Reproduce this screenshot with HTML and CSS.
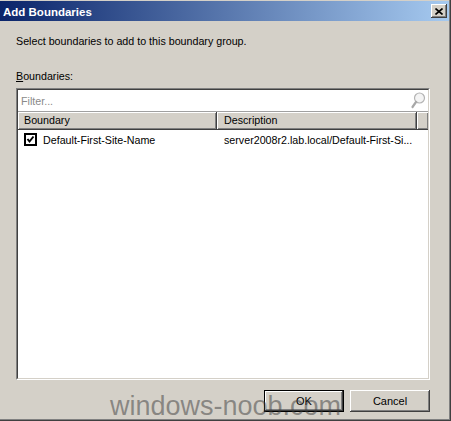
FILE: index.html
```html
<!DOCTYPE html>
<html lang="en">
  <head>
    <meta charset="UTF-8" />
    <title>Add Boundaries</title>
    <link rel="stylesheet" href="styles.css">
  </head>
  <body>
    <div class="window">
      <div class="titlebar">
        <span class="title">Add Boundaries</span>
        <button class="close-btn">
          <svg width="8" height="7" viewBox="0 0 8 7">
            <path d="M0.5 0.5 L7.5 6.5 M7.5 0.5 L0.5 6.5" stroke="#000" stroke-width="1.6" fill="none" />
          </svg>
        </button>
      </div>

      <div class="content">
        <p class="intro">Select boundaries to add to this boundary group.</p>
        <div class="field-label"><u>B</u>oundaries:</div>

        <div class="listbox">
          <div class="listbox-inner">
            <div class="filter">
              <span class="filter-hint">Filter...</span>
              <svg class="search-icon" width="16" height="17" viewBox="0 0 16 17">
                <circle cx="9.5" cy="6" r="5" fill="#f4f4f4" stroke="#b4b4b4" stroke-width="1.2" />
                <path d="M6 10 L2.5 15" stroke="#a8a8a8" stroke-width="2.2" stroke-linecap="round" />
              </svg>
            </div>

            <div class="list-header">
              <div class="col col-name">Boundary</div>
              <div class="col col-desc">Description</div>
              <div class="col col-rest"></div>
            </div>

            <div class="list-row">
              <div class="cell cell-name">
                <svg class="checkbox" width="13" height="13" viewBox="0 0 13 13">
                  <rect x="1" y="1" width="11" height="11" fill="#fff" stroke="#000" stroke-width="2" />
                  <path d="M3.5 6 L5.5 8.5 L9.5 3.5" stroke="#000" stroke-width="2" fill="none" />
                </svg>
                <span>Default-First-Site-Name</span>
              </div>
              <div class="cell cell-desc">server2008r2.lab.local/Default-First-Si...</div>
            </div>
          </div>
        </div>

        <div class="buttons">
          <button class="btn btn-default">OK</button>
          <button class="btn">Cancel</button>
        </div>
      </div>

      <div class="watermark">windows-noob.com</div>
    </div>
  </body>
</html>
```

FILE: styles.css
```css
* {
  margin: 0;
  padding: 0;
  box-sizing: border-box;
}

body {
  background: #d4d0c8;
  font-family: "Liberation Sans", Arial, sans-serif;
  font-size: 10.7px;
  color: #000;
}

.window {
  position: relative;
  width: 451px;
  height: 421px;
  padding-top: 1px;
  background: #d4d0c8;
  border-right: 1px solid #404040;
  border-bottom: 1px solid #404040;
  box-shadow: inset -1px -1px #808080;
  overflow: hidden;
}

.titlebar {
  height: 20px;
  margin-right: 1px;
  padding: 0 2px 0 3px;
  display: flex;
  align-items: center;
  justify-content: space-between;
  background: linear-gradient(to right, #0a246a, #a6caf0);
}

.title {
  color: #fff;
  font-weight: bold;
  font-size: 11.5px;
  padding-top: 1px;
}

.close-btn {
  width: 16px;
  height: 14px;
  border: none;
  background: #d4d0c8;
  display: flex;
  align-items: center;
  justify-content: center;
  box-shadow: inset -1px -1px #404040, inset 1px 1px #fff, inset -2px -2px #808080;
}

.content {
  padding: 0 20px 0 16px;
}

.intro {
  margin-top: 14px;
  line-height: 13px;
}

.field-label {
  margin-top: 22px;
  line-height: 13px;
}

.listbox {
  margin-top: 5px;
  height: 292px;
  border: 1px solid;
  border-color: #808080 #fff #fff #808080;
}

.listbox-inner {
  height: 100%;
  background: #fff;
  border: 1px solid;
  border-color: #404040 #d4d0c8 #d4d0c8 #404040;
}

.filter {
  height: 22px;
  padding: 0 2px 0 3px;
  display: flex;
  align-items: center;
  justify-content: space-between;
  border-bottom: 1px solid #a0a0a0;
}

.filter-hint {
  color: #8a8a8a;
}

.list-header {
  height: 18px;
  display: flex;
  background: #d4d0c8;
  border-bottom: 1px solid #404040;
}

.col {
  height: 100%;
  line-height: 17px;
  padding-left: 6px;
  border-right: 1px solid #404040;
  box-shadow: inset 1px 1px #fff, inset -1px -1px #808080;
  white-space: nowrap;
}

.col-name {
  width: 199px;
}

.col-desc {
  width: 200px;
  padding-left: 7px;
}

.col-rest {
  flex: 1;
  border-right: none;
}

.list-row {
  height: 19px;
  display: flex;
  align-items: center;
}

.cell {
  white-space: nowrap;
  overflow: hidden;
}

.cell-name {
  width: 199px;
  padding-left: 6px;
  display: flex;
  align-items: center;
  gap: 6px;
}

.cell-desc {
  width: 200px;
  padding-left: 7px;
}

.checkbox {
  flex-shrink: 0;
}

.buttons {
  margin-top: 10px;
  display: flex;
  justify-content: flex-end;
  gap: 6px;
}

.btn {
  width: 80px;
  height: 22px;
  border: none;
  background: #d4d0c8;
  font-family: inherit;
  font-size: 11px;
  color: #000;
  box-shadow: inset -1px -1px #404040, inset 1px 1px #fff, inset -2px -2px #808080;
}

.btn-default {
  border: 1px solid #000;
}

.watermark {
  position: absolute;
  left: 110px;
  top: 393px;
  font-size: 27px;
  line-height: 27px;
  color: rgba(60, 60, 60, 0.5);
  white-space: nowrap;
  pointer-events: none;
}
```
